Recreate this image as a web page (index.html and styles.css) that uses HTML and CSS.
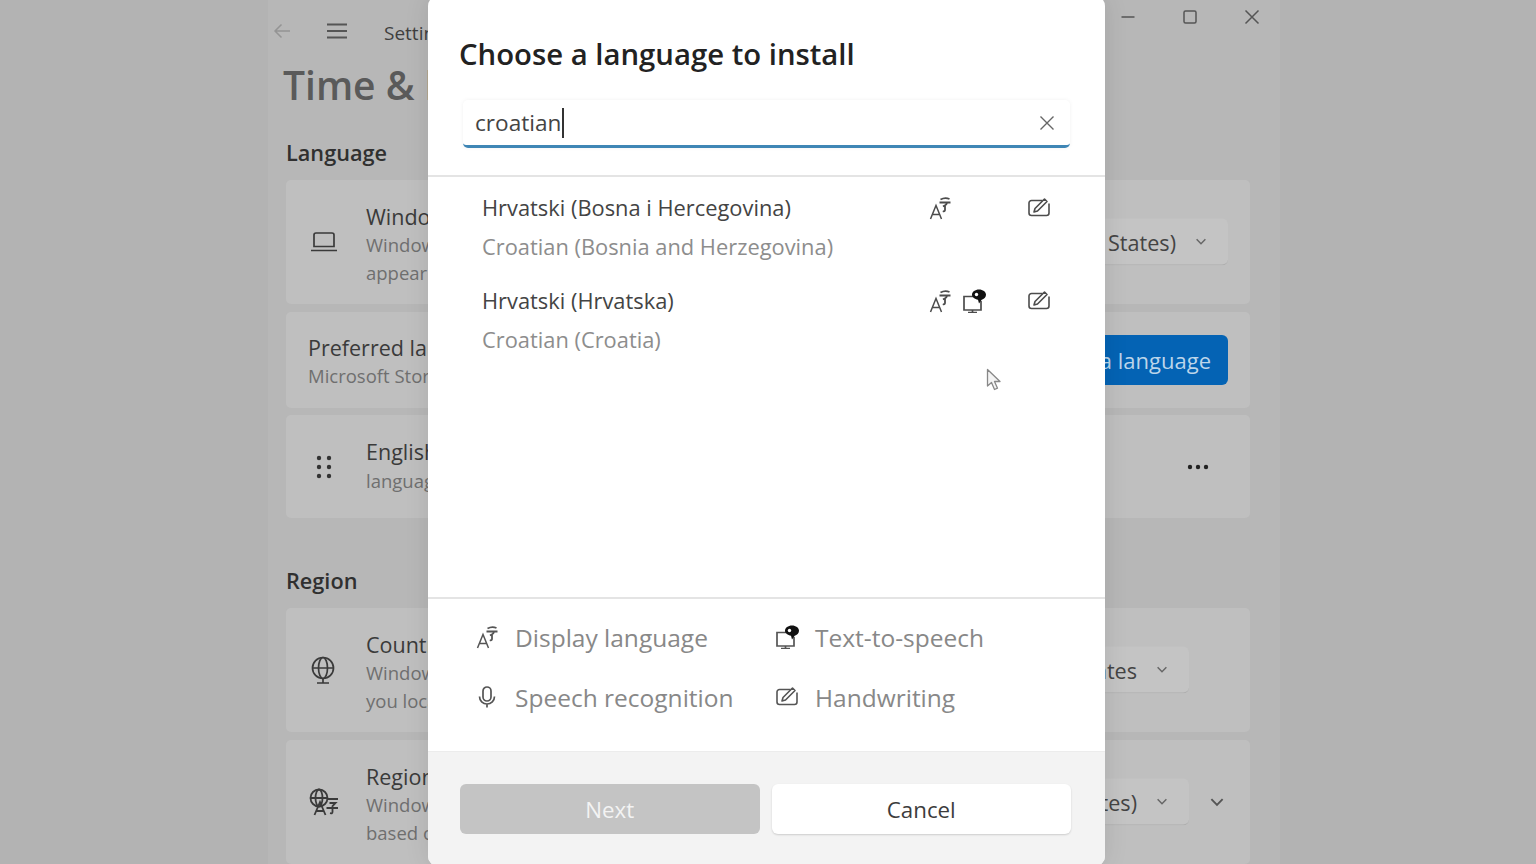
FILE: index.html
```html
<!DOCTYPE html>
<html lang="en">
<head>
<meta charset="utf-8">
<title>Settings</title>
<link rel="stylesheet" href="styles.css">
</head>
<body>
<svg class="defs" width="0" height="0" aria-hidden="true">
  <symbol id="i-lang" viewBox="0 0 24 24">
    <path d="M2.500 23 8 9.500 13.500 23M4.500 18.500h7" fill="none" stroke="currentColor" stroke-width="1.500"/>
    <path d="M12.500 3.500Q17 1 21.500 3M11.500 6.500h11M18 6.500c1 .5 1 1.500-.5 2.500l-2.500 1.500M17 10v4c0 1.500-1 1.500-2.200 1.200" fill="none" stroke="currentColor" stroke-width="1.800"/>
  </symbol>
  <symbol id="i-tts" viewBox="0 0 24 24">
    <path d="M11 7.500H2v13.500h17V12M10.500 21v2.500M6 23.500h9" fill="none" stroke="currentColor" stroke-width="1.700"/>
    <path d="M17 .5c3.900 0 7 2.400 7 5.300 0 2.400-2 4.300-4.300 4.900L17 14.500l-1-3.800C12.800 10.200 10 8.300 10 5.800 10 2.900 13.100.5 17 .5Z" fill="#111"/>
    <circle cx="14.500" cy="5.500" r="1.700" fill="#fff"/>
  </symbol>
  <symbol id="i-hand" viewBox="0 0 24 24">
    <path d="M15.500 4.500H4.500a2.500 2.500 0 0 0-2.500 2.500v10a2.500 2.500 0 0 0 2.500 2.500h15a2.500 2.500 0 0 0 2.500-2.500V7.500" fill="none" stroke="currentColor" stroke-width="1.600"/>
    <path d="M7 16l1-3.500 9.500-9.500 2.500 2.500-9.500 9.500Z" fill="none" stroke="currentColor" stroke-width="1.600" stroke-linejoin="round"/>
  </symbol>
  <symbol id="i-mic" viewBox="0 0 24 24">
    <rect x="8" y="2" width="8" height="14" rx="4" fill="none" stroke="currentColor" stroke-width="1.700"/>
    <path d="M4.500 11.500a7.500 7.500 0 0 0 15 0M12 19v3.500" fill="none" stroke="currentColor" stroke-width="1.700"/>
  </symbol>
  <symbol id="i-chev" viewBox="0 0 16 16">
    <path d="M3 5.500 8 10.500 13 5.500" fill="none" stroke="currentColor" stroke-width="1.700"/>
  </symbol>
</svg>

<div class="window">
  <header class="titlebar">
    <svg class="tb-back" viewBox="0 0 20 20"><path d="M18 10H3M9.500 3.500 3 10l6.500 6.500" fill="none" stroke="currentColor" stroke-width="1.500"/></svg>
    <svg class="tb-menu" viewBox="0 0 22 18"><path d="M1 2.500h20M1 9h20M1 15.500h20" fill="none" stroke="currentColor" stroke-width="1.800"/></svg>
    <span class="tb-title">Settings</span>
    <span class="tb-spacer"></span>
    <div class="caption">
      <svg class="cap" viewBox="0 0 16 16"><path d="M1.500 8h13" stroke="currentColor" stroke-width="1.500"/></svg>
      <svg class="cap" viewBox="0 0 16 16"><rect x="2" y="2" width="12" height="12" rx="1.500" fill="none" stroke="currentColor" stroke-width="1.500"/></svg>
      <svg class="cap" viewBox="0 0 16 16"><path d="M1.500 1.500l13 13M14.500 1.500l-13 13" stroke="currentColor" stroke-width="1.500"/></svg>
    </div>
  </header>
  <h1 class="page-title">Time &amp; language</h1>

  <h2 class="section-title">Language</h2>
  <div class="cards">
    <section class="card card-tall">
      <svg class="card-icon laptop" viewBox="0 0 28 22"><path d="M4 15.500V4a2 2 0 0 1 2-2h16a2 2 0 0 1 2 2v11.500ZM1 19.500h26" fill="none" stroke="currentColor" stroke-width="1.700"/></svg>
      <div class="card-text">
        <div class="card-name">Windows display language</div>
        <div class="card-sub">Windows features like Settings and File Explorer will</div>
        <div class="card-sub">appear in this language</div>
      </div>
      <div class="select select-a"><span>English (United States)</span><svg class="chev"><use href="#i-chev"/></svg></div>
    </section>
    <section class="card card-mid">
      <div class="card-text">
        <div class="card-name">Preferred languages</div>
        <div class="card-sub">Microsoft Store apps will appear in the first supported language</div>
      </div>
      <div class="add-btn"><span>Add a language</span></div>
    </section>
    <section class="card card-lang">
      <svg class="card-icon grip" viewBox="0 0 16 24"><g fill="currentColor"><circle cx="3" cy="3" r="2.200"/><circle cx="13" cy="3" r="2.200"/><circle cx="3" cy="12" r="2.200"/><circle cx="13" cy="12" r="2.200"/><circle cx="3" cy="21" r="2.200"/><circle cx="13" cy="21" r="2.200"/></g></svg>
      <div class="card-text">
        <div class="card-name">English (United States)</div>
        <div class="card-sub">language pack, text-to-speech</div>
      </div>
      <svg class="more" viewBox="0 0 22 6"><g fill="currentColor"><circle cx="3" cy="3" r="2.200"/><circle cx="11" cy="3" r="2.200"/><circle cx="19" cy="3" r="2.200"/></g></svg>
    </section>
  </div>

  <h2 class="section-title region-title">Region</h2>
  <div class="cards">
    <section class="card card-tall">
      <svg class="card-icon globe" viewBox="0 0 26 28"><g fill="none" stroke="currentColor" stroke-width="1.700"><circle cx="13" cy="12" r="10.500"/><ellipse cx="13" cy="12" rx="4.500" ry="10.500"/><path d="M2.500 12h21M13 22.500V27M7 27h12"/></g></svg>
      <div class="card-text">
        <div class="card-name">Country or region</div>
        <div class="card-sub">Windows and apps might use your country or region to give</div>
        <div class="card-sub">you local content</div>
      </div>
      <div class="select select-b"><span>United States</span><svg class="chev"><use href="#i-chev"/></svg></div>
    </section>
    <section class="card card-tall">
      <svg class="card-icon globe-lang" viewBox="0 0 30 28"><g fill="none" stroke="currentColor" stroke-width="1.800"><circle cx="10" cy="10" r="8.500"/><ellipse cx="10" cy="10" rx="3.500" ry="8.500"/><path d="M1.500 10h17M5.500 27 11 14l5.500 13M7.500 23h7M18 11h11M20.500 15h6l-3 3v6c0 1.500-1 1.500-2.500 1.200M17.500 20h11.500"/></g></svg>
      <div class="card-text">
        <div class="card-name">Regional format</div>
        <div class="card-sub">Windows and some apps format dates and times</div>
        <div class="card-sub">based on your regional format</div>
      </div>
      <div class="select select-c"><span>English (United States)</span><svg class="chev"><use href="#i-chev"/></svg></div>
      <svg class="expand"><use href="#i-chev"/></svg>
    </section>
  </div>
</div>

<div class="dialog" role="dialog">
  <div class="dialog-body">
    <h3 class="dialog-title">Choose a language to install</h3>
    <div class="search">
      <span class="search-text">croatian</span><span class="caret"></span>
      <svg class="search-x" viewBox="0 0 16 16"><path d="M1.500 1.500l13 13M14.500 1.500l-13 13" stroke="currentColor" stroke-width="1.400"/></svg>
    </div>
  </div>
  <div class="results">
    <div class="result">
      <div class="result-text">
        <div class="result-name">Hrvatski (Bosna i Hercegovina)</div>
        <div class="result-sub">Croatian (Bosnia and Herzegovina)</div>
      </div>
      <div class="features">
        <svg class="feat"><use href="#i-lang"/></svg>
        <span class="feat"></span>
        <svg class="feat feat-hand"><use href="#i-hand"/></svg>
      </div>
    </div>
    <div class="result">
      <div class="result-text">
        <div class="result-name">Hrvatski (Hrvatska)</div>
        <div class="result-sub">Croatian (Croatia)</div>
      </div>
      <div class="features">
        <svg class="feat"><use href="#i-lang"/></svg>
        <svg class="feat"><use href="#i-tts"/></svg>
        <svg class="feat feat-hand"><use href="#i-hand"/></svg>
      </div>
    </div>
  </div>
  <div class="legend">
    <div class="legend-item"><svg class="legend-icon"><use href="#i-lang"/></svg><span>Display language</span></div>
    <div class="legend-item"><svg class="legend-icon"><use href="#i-tts"/></svg><span>Text-to-speech</span></div>
    <div class="legend-item"><svg class="legend-icon"><use href="#i-mic"/></svg><span>Speech recognition</span></div>
    <div class="legend-item"><svg class="legend-icon"><use href="#i-hand"/></svg><span>Handwriting</span></div>
  </div>
  <div class="footer">
    <div class="btn btn-next">Next</div>
    <div class="btn btn-cancel">Cancel</div>
  </div>
</div>

<svg class="cursor" viewBox="0 0 16 24"><path d="M1.500 1.500V18l4-3.500 3 7 3-1.300-3-6.700h5.500Z" fill="#f4f4f4" stroke="#888" stroke-width="1.300" stroke-linejoin="round"/></svg>
</body>
</html>
```

FILE: styles.css
```css
* { box-sizing: border-box; }
html, body { height: 100%; }
body {
  margin: 0;
  height: 864px;
  overflow: hidden;
  background: #b3b3b3;
  font-family: "Open Sans", "Noto Sans", "Liberation Sans", sans-serif;
  color: #2c2c2c;
  position: relative;
}
.defs { position: absolute; }

.window {
  width: 1012px;
  height: 864px;
  margin-left: 268px;
  background: #b7b7b7;
  padding: 0 30px 0 18px;
  overflow: hidden;
}
.titlebar { display: flex; align-items: center; height: 34px; color: #555; }
.tb-back { width: 20px; height: 20px; margin: 28px 0 0 -14px; color: #949494; }
.tb-menu { width: 22px; height: 18px; margin: 28px 0 0 34px; color: #555; }
.tb-title { margin: 32px 0 0 36px; font-size: 19px; color: #3f3f3f; }
.tb-spacer { flex: 1; }
.caption { display: flex; gap: 46px; margin-right: -10px; color: #555; }
.cap { width: 16px; height: 16px; }

.page-title { margin: 25px 0 0 -3px; font-size: 39px; font-weight: 600; color: #5a5a5a; line-height: 52px; white-space: nowrap; }
.section-title { margin: 0; font-size: 21.700px; font-weight: 600; color: #303030; line-height: 30px; }
.page-title + .section-title { margin-top: 27px; }
.region-title { margin-top: 48px; }

.cards { display: flex; flex-direction: column; gap: 8px; margin-top: 12px; }
.card {
  display: flex;
  align-items: center;
  background: #bfbfbf;
  border-radius: 5px;
  padding-left: 22px;
  width: 964px;
  position: relative;
}
.card-tall { height: 124px; }
.card-mid { height: 96px; }
.card-lang { height: 103px; margin-top: -1px; }
.card-icon { flex: none; color: #3a3a3a; }
.laptop { width: 28px; height: 22px; margin: 0 28px 0 2px; }
.grip { width: 16px; height: 24px; margin: 0 34px 0 8px; color: #333; }
.globe { width: 26px; height: 28px; margin: 0 30px 0 2px; }
.globe-lang { width: 30px; height: 28px; margin: 0 27px 0 1px; }
.card-text { white-space: nowrap; }
.card-tall .card-text { margin-top: 5px; }
.card-mid .card-text { margin-top: 4px; }
.card-name { font-size: 21.500px; line-height: 28px; color: #3a3a3a; }
.card-lang .card-name { margin-bottom: 1px; }
.card-sub { font-size: 18.500px; line-height: 28px; color: #6f6f6f; }

.select {
  position: absolute;
  top: 50%;
  transform: translateY(-50%);
  height: 47px;
  display: flex;
  align-items: center;
  background: #c4c4c4;
  border-radius: 6px;
  border-bottom: 1px solid #adadad;
  font-size: 21.600px;
  color: #444;
  white-space: nowrap;
  padding: 0 20px 0 18px;
  gap: 18px;
}
.select-a { right: 22px; }
.select-b { right: 61px; }
.select-c { right: 61px; }
.chev { width: 14px; height: 14px; color: #666; flex: none; }
.expand { position: absolute; right: 24px; top: 50%; width: 18px; height: 18px; margin-top: -9px; color: #555; }
.add-btn {
  position: absolute;
  right: 22px;
  top: 50%;
  transform: translateY(-50%);
  height: 50px;
  padding: 0 17px 0 20px;
  display: flex;
  align-items: center;
  background: #0463b4;
  color: #bcd5ea;
  border-radius: 6px;
  font-size: 22px;
}
.more { position: absolute; right: 41px; top: 50%; width: 22px; height: 6px; margin-top: -3px; color: #222; }

.dialog {
  position: absolute;
  left: 428px;
  top: -4px;
  width: 677px;
  height: 870px;
  border-radius: 10px;
  background: #fff;
  display: flex;
  flex-direction: column;
  overflow: hidden;
  box-shadow: 0 0 24px rgba(0,0,0,.1);
}
.dialog-body { padding: 4px 34px 0; height: 181px; border-bottom: 2px solid #e4e4e4; }
.dialog-title { margin: 32px 0 0 -3px; font-size: 29.300px; line-height: 44px; font-weight: 600; color: #222; }
.search {
  display: flex;
  align-items: center;
  height: 48px;
  margin: 24px 1px 0;
  padding: 0 15px 0 12px;
  border-radius: 5px;
  box-shadow: 0 0 4px rgba(0,0,0,.06);
  border-bottom: 3px solid #3f86b5;
  font-size: 22.600px;
  color: #444;
}
.caret { width: 2px; height: 30px; background: #333; margin-left: 1px; }
.search-x { width: 16px; height: 16px; margin-left: auto; color: #666; }
.results { height: 420px; padding: 11px 54px 0; }
.result { display: flex; justify-content: space-between; height: 93px; }
.result-text { white-space: nowrap; }
.result-name { font-size: 21.850px; line-height: 39px; color: #444; }
.result-sub { font-size: 21.850px; line-height: 39px; color: #8d8d8d; }
.features { display: flex; padding-top: 8px; gap: 10px; color: #4c4c4c; height: 32px; }
.feat { width: 24px; height: 24px; display: block; }
.feat-hand { margin-left: 31px; }
.legend {
  display: grid;
  grid-template-columns: 300px 1fr;
  grid-auto-rows: 60px;
  height: 154px;
  padding: 8px 0 0 47px;
  border-top: 2px solid #e4e4e4;
}
.legend-item { display: flex; align-items: center; font-size: 24.500px; color: #888; white-space: nowrap; }
.legend-icon { width: 24px; height: 24px; color: #555; margin-right: 16px; flex: none; }
.footer {
  flex: 1;
  display: flex;
  gap: 12px;
  background: #f3f3f3;
  padding: 32px 34px 0 32px;
  border-top: 1px solid #ececec;
}
.btn {
  flex: 1;
  height: 50px;
  border-radius: 6px;
  display: flex;
  align-items: center;
  justify-content: center;
  font-size: 22.300px;
}
.btn-next { background: #c4c4c4; color: #f3f3f3; }
.btn-cancel { background: #fff; color: #3c3c3c; box-shadow: 0 1px 2px rgba(0,0,0,.16); }

.cursor { position: absolute; left: 986px; top: 368px; width: 16px; height: 24px; }
```
